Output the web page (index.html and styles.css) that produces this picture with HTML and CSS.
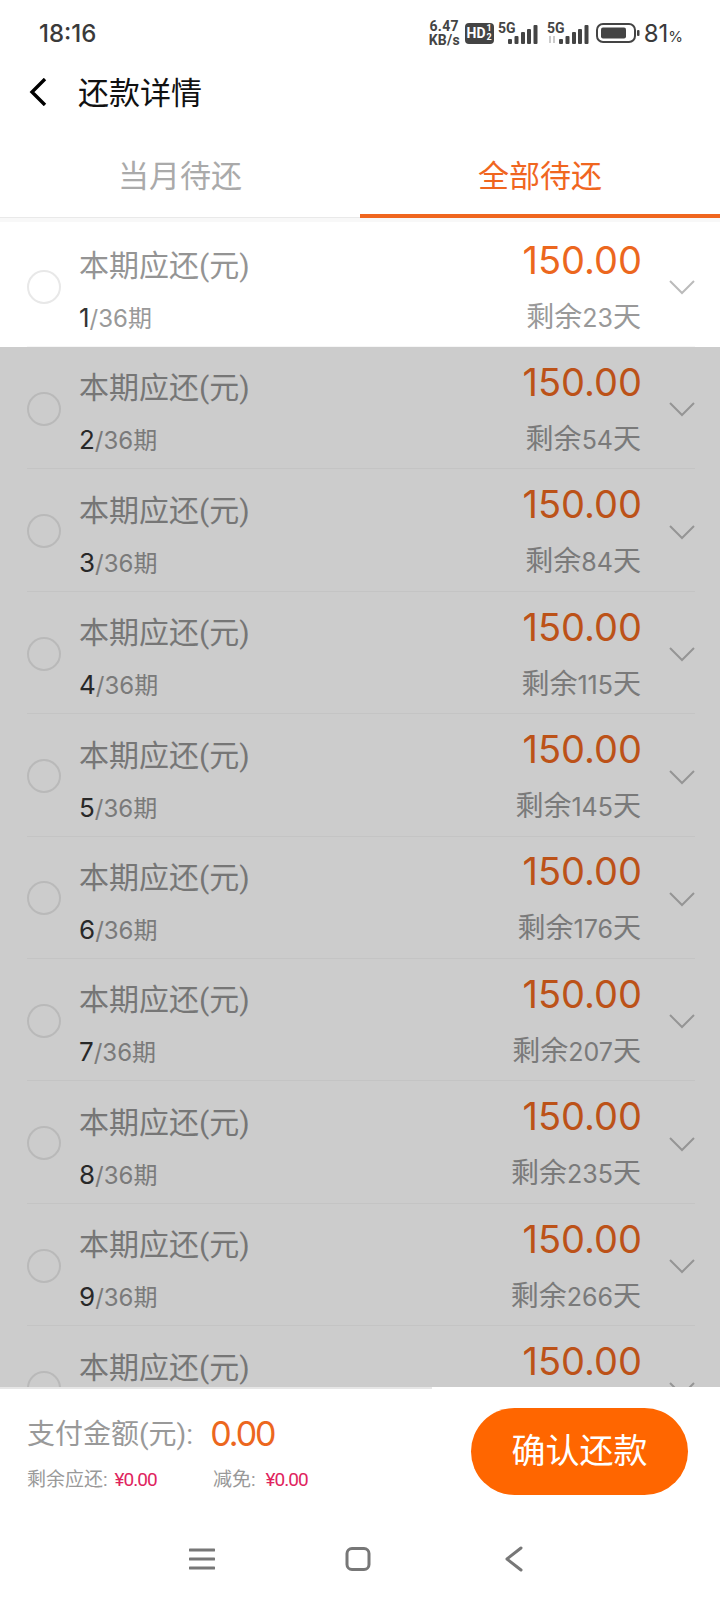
FILE: index.html
```html
<!DOCTYPE html>
<html lang="zh-CN">
<head>
    <meta charset="UTF-8">
    <title>还款详情</title>
    <link rel="stylesheet" href="styles.css">
</head>
<body>
    <div class="page">
        <!-- 状态栏 -->
        <div class="status-bar">
            <span class="time">18:16</span>
            <div class="status-icons">
                <span class="speed">6.47<br>KB/s</span>
                <span class="hd">HD<span class="hd-num">1<br>2</span></span>
                <svg class="signal" width="40" height="24" viewBox="0 0 40 24">
                    <text x="0" y="12" class="sig-text">5G</text>
                    <rect x="10" y="18" width="4" height="5" rx="1"/>
                    <rect x="16.500" y="15" width="4" height="8" rx="1"/>
                    <rect x="23" y="11" width="4" height="12" rx="1"/>
                    <rect x="29" y="8" width="4" height="15" rx="1"/>
                    <rect x="35.500" y="4" width="4" height="19" rx="1"/>
                </svg>
                <svg class="signal signal-2" width="42" height="24" viewBox="0 0 42 24">
                    <text x="0" y="12" class="sig-text">5G</text>
                    <path d="M3 15v7M7 15v7" stroke="#bbb" stroke-width="1.500"/>
                    <rect x="12" y="18" width="4" height="5" rx="1"/>
                    <rect x="18.500" y="15" width="4" height="8" rx="1"/>
                    <rect x="25" y="11" width="4" height="12" rx="1"/>
                    <rect x="31" y="8" width="4" height="15" rx="1"/>
                    <rect x="37.500" y="4" width="4" height="19" rx="1"/>
                </svg>
                <svg class="battery" width="44" height="20" viewBox="0 0 44 20">
                    <rect x="1" y="1" width="38" height="18" rx="6" fill="none" stroke="#444" stroke-width="2"/>
                    <rect x="5" y="4.500" width="25" height="11" rx="2" fill="#444"/>
                    <rect x="41" y="7" width="2.500" height="6" rx="1" fill="#444"/>
                </svg>
                <span class="percent">81<small>%</small></span>
            </div>
        </div>

        <div class="title-bar">
            <svg class="back" width="20" height="28" viewBox="0 0 20 28">
                <path d="M17 1 L4 14 L17 27" fill="none" stroke="#000" stroke-width="3.400"/>
            </svg>
            <span class="title">还款详情</span>
        </div>

        <div class="tabs">
            <div class="tab">当月待还</div>
            <div class="tab active">全部待还</div>
        </div>

        <div class="list-wrap">
            <ul class="list">
                <li class="row">
                    <span class="radio"></span>
                    <div class="row-left"><p class="row-name">本期应还(元)</p><p class="row-no"><b>1</b>/36期</p></div>
                    <div class="row-right"><p class="money">150.00</p><p class="days">剩余<span class="num">23</span>天</p></div>
                    <svg class="arrow" width="26" height="15" viewBox="0 0 26 15"><path d="M1 1 L13 13 L25 1"/></svg>
                </li>
                <li class="row">
                    <span class="radio"></span>
                    <div class="row-left"><p class="row-name">本期应还(元)</p><p class="row-no"><b>2</b>/36期</p></div>
                    <div class="row-right"><p class="money">150.00</p><p class="days">剩余<span class="num">54</span>天</p></div>
                    <svg class="arrow" width="26" height="15" viewBox="0 0 26 15"><path d="M1 1 L13 13 L25 1"/></svg>
                </li>
                <li class="row">
                    <span class="radio"></span>
                    <div class="row-left"><p class="row-name">本期应还(元)</p><p class="row-no"><b>3</b>/36期</p></div>
                    <div class="row-right"><p class="money">150.00</p><p class="days">剩余<span class="num">84</span>天</p></div>
                    <svg class="arrow" width="26" height="15" viewBox="0 0 26 15"><path d="M1 1 L13 13 L25 1"/></svg>
                </li>
                <li class="row">
                    <span class="radio"></span>
                    <div class="row-left"><p class="row-name">本期应还(元)</p><p class="row-no"><b>4</b>/36期</p></div>
                    <div class="row-right"><p class="money">150.00</p><p class="days">剩余<span class="num">115</span>天</p></div>
                    <svg class="arrow" width="26" height="15" viewBox="0 0 26 15"><path d="M1 1 L13 13 L25 1"/></svg>
                </li>
                <li class="row">
                    <span class="radio"></span>
                    <div class="row-left"><p class="row-name">本期应还(元)</p><p class="row-no"><b>5</b>/36期</p></div>
                    <div class="row-right"><p class="money">150.00</p><p class="days">剩余<span class="num">145</span>天</p></div>
                    <svg class="arrow" width="26" height="15" viewBox="0 0 26 15"><path d="M1 1 L13 13 L25 1"/></svg>
                </li>
                <li class="row">
                    <span class="radio"></span>
                    <div class="row-left"><p class="row-name">本期应还(元)</p><p class="row-no"><b>6</b>/36期</p></div>
                    <div class="row-right"><p class="money">150.00</p><p class="days">剩余<span class="num">176</span>天</p></div>
                    <svg class="arrow" width="26" height="15" viewBox="0 0 26 15"><path d="M1 1 L13 13 L25 1"/></svg>
                </li>
                <li class="row">
                    <span class="radio"></span>
                    <div class="row-left"><p class="row-name">本期应还(元)</p><p class="row-no"><b>7</b>/36期</p></div>
                    <div class="row-right"><p class="money">150.00</p><p class="days">剩余<span class="num">207</span>天</p></div>
                    <svg class="arrow" width="26" height="15" viewBox="0 0 26 15"><path d="M1 1 L13 13 L25 1"/></svg>
                </li>
                <li class="row">
                    <span class="radio"></span>
                    <div class="row-left"><p class="row-name">本期应还(元)</p><p class="row-no"><b>8</b>/36期</p></div>
                    <div class="row-right"><p class="money">150.00</p><p class="days">剩余<span class="num">235</span>天</p></div>
                    <svg class="arrow" width="26" height="15" viewBox="0 0 26 15"><path d="M1 1 L13 13 L25 1"/></svg>
                </li>
                <li class="row">
                    <span class="radio"></span>
                    <div class="row-left"><p class="row-name">本期应还(元)</p><p class="row-no"><b>9</b>/36期</p></div>
                    <div class="row-right"><p class="money">150.00</p><p class="days">剩余<span class="num">266</span>天</p></div>
                    <svg class="arrow" width="26" height="15" viewBox="0 0 26 15"><path d="M1 1 L13 13 L25 1"/></svg>
                </li>
                <li class="row">
                    <span class="radio"></span>
                    <div class="row-left"><p class="row-name">本期应还(元)</p><p class="row-no">&nbsp;</p></div>
                    <div class="row-right"><p class="money">150.00</p><p class="days">&nbsp;</p></div>
                    <svg class="arrow" width="26" height="15" viewBox="0 0 26 15"><path d="M1 1 L13 13 L25 1"/></svg>
                </li>
            </ul>
            <div class="mask"></div>
        </div>

        <div class="footer">
            <div class="foot-line"></div>
            <div class="pay-bar">
                <div class="pay-info">
                    <div class="pay-total"><span class="pay-label">支付金额(元):</span><span class="pay-num">0.00</span></div>
                    <div class="pay-small">
                        <span class="small-item">剩余应还:<em>¥0.00</em></span>
                        <span class="small-item">减免:<em>¥0.00</em></span>
                    </div>
                </div>
                <div class="pay-btn">确认还款</div>
            </div>
            <div class="nav-bar">
                <svg width="26" height="24" viewBox="0 0 26 24"><path d="M1 3H25M1 12H25M1 21H25" stroke="#777" stroke-width="3" fill="none" stroke-linecap="round"/></svg>
                <svg class="nav-home" width="26" height="24" viewBox="0 0 26 24"><rect x="2" y="1.500" width="22" height="21" rx="5" stroke="#777" stroke-width="3" fill="none"/></svg>
                <svg width="18" height="26" viewBox="0 0 18 26"><path d="M16 2 L2 13 L16 24" stroke="#777" stroke-width="3" fill="none" stroke-linecap="round" stroke-linejoin="round"/></svg>
            </div>
        </div>
    </div>
</body>
</html>
```

FILE: styles.css
```css
* {
    margin: 0;
    padding: 0;
    box-sizing: border-box;
}
ul {
    list-style: none;
}
body {
    width: 720px;
    height: 1600px;
    overflow: hidden;
    background-color: #fff;
    font-family: Roboto, "Noto Sans CJK SC", sans-serif;
}
.page {
    display: flex;
    flex-direction: column;
    height: 1600px;
}

/* 状态栏 */
.status-bar {
    display: flex;
    justify-content: space-between;
    align-items: center;
    height: 66px;
    padding: 0 37px 0 39px;
}
.time {
    font-family: Inter, sans-serif;
    font-size: 24px;
    font-weight: 500;
    color: #3a3a3a;
}
.status-icons {
    display: flex;
    align-items: center;
    height: 24px;
}
.speed {
    width: 31px;
    margin-right: 5px;
    font-size: 14px;
    line-height: 14px;
    letter-spacing: .3px;
    font-weight: 700;
    color: #444;
    text-align: center;
    white-space: nowrap;
}
.hd {
    display: flex;
    align-items: center;
    justify-content: center;
    margin-right: 4px;
    width: 29px;
    height: 21px;
    font-size: 14px;
    line-height: 1;
    font-weight: 700;
    color: #fff;
    background-color: #444;
    border-radius: 4px;
}
.hd-num {
    margin-left: 1px;
    font-size: 9px;
    line-height: 9px;
    text-align: center;
}
.signal {
    margin-right: 9px;
    fill: #444;
    overflow: visible;
}
.signal-2 {
    margin-right: 16px;
}
.sig-text {
    font-size: 14px;
    font-weight: 700;
    fill: #444;
}
.battery {
    margin-left: -9px;
    margin-right: 4px;
}
.percent {
    font-family: Inter, sans-serif;
    font-size: 24px;
    color: #3a3a3a;
    white-space: nowrap;
}
.percent small {
    font-size: 15px;
}

/* 标题 */
.title-bar {
    display: flex;
    align-items: center;
    height: 52px;
    padding-left: 28px;
}
.back {
    margin-right: 30px;
}
.title {
    margin-bottom: 4px;
    font-size: 31px;
    color: #111;
}

/* 选项卡 */
.tabs {
    display: flex;
    height: 100px;
    border-bottom: 1px solid #e9e9e9;
}
.tab {
    flex: 1;
    padding-top: 32px;
    text-align: center;
    font-size: 31px;
    line-height: 54px;
    color: #aaa;
}
.tab.active {
    color: #f0661f;
    border-bottom: 4px solid #f0661f;
    height: 100px;
}

/* 列表 */
.list-wrap {
    position: relative;
    flex: 1;
    overflow: hidden;
    border-top: 4px solid #f8f8f8;
}
.list {
    padding-top: 5px;
}
.row {
    display: flex;
    align-items: center;
    height: 120px;
    margin-left: 27px;
    margin-right: 25px;
    margin-bottom: 2.400px;
    border-bottom: 1px solid #f6f6f6;
}
.radio {
    flex-shrink: 0;
    margin-right: 18px;
    width: 34px;
    height: 34px;
    border: 2px solid #e8e8e8;
    border-radius: 50%;
}
.row-left {
    flex: 1;
    padding-top: 10px;
}
.row-name {
    font-size: 30px;
    line-height: 40px;
    color: #949494;
}
.row-no {
    margin-top: 14px;
    font-family: Inter, "Noto Sans CJK SC", sans-serif;
    font-size: 24px;
    line-height: 36px;
    color: #999;
}
.row-no b {
    font-size: 26px;
    font-weight: 400;
    color: #333;
}
.row-right {
    text-align: right;
    margin-bottom: 3px;
}
.money {
    margin-right: -1px;
    font-family: Inter, sans-serif;
    font-size: 38px;
    line-height: 50px;
    color: #ec671e;
}
.days {
    margin-top: 15px;
    font-size: 28px;
    line-height: 36px;
    color: #999;
}
.num {
    font-family: Inter, sans-serif;
    font-size: 25px;
}
.arrow {
    margin-left: 28px;
    margin-top: 2px;
    fill: none;
    stroke: #bbb;
    stroke-width: 2;
}
.mask {
    position: absolute;
    left: 0;
    right: 0;
    top: 125px;
    bottom: 0;
    background-color: rgba(0, 0, 0, .2);
}

/* 底部 */
.footer {
    position: relative;
    height: 213px;
    background-color: #fff;
}
.foot-line {
    width: 432px;
    height: 2px;
    background-color: #e6e6e6;
}
.pay-bar {
    display: flex;
    justify-content: space-between;
    height: 152px;
    padding: 19px 32px 0 27px;
}
.pay-total {
    display: flex;
    align-items: center;
    height: 50px;
}
.pay-label {
    margin-bottom: 2px;
    font-size: 28px;
    color: #999;
}
.pay-num {
    margin-left: 17px;
    font-family: Inter, sans-serif;
    font-size: 34px;
    letter-spacing: -2px;
    color: #ec671e;
}
.pay-small {
    display: flex;
    margin-top: 7px;
    font-size: 19px;
    line-height: 30px;
    color: #999;
}
.small-item {
    width: 186px;
}
.small-item em {
    margin-left: 7px;
    font-style: normal;
    letter-spacing: -1px;
    color: #e0245e;
}
.small-item + .small-item em {
    margin-left: 10px;
}
.pay-btn {
    width: 217px;
    height: 87px;
    text-align: center;
    font-size: 34px;
    line-height: 87px;
    color: #fff;
    background-color: #f60;
    border-radius: 44px;
}
.nav-bar {
    display: flex;
    justify-content: space-between;
    align-items: center;
    padding: 0 197px 0 189px;
    height: 36px;
}
.nav-home {
    margin-left: -4px;
}
```
